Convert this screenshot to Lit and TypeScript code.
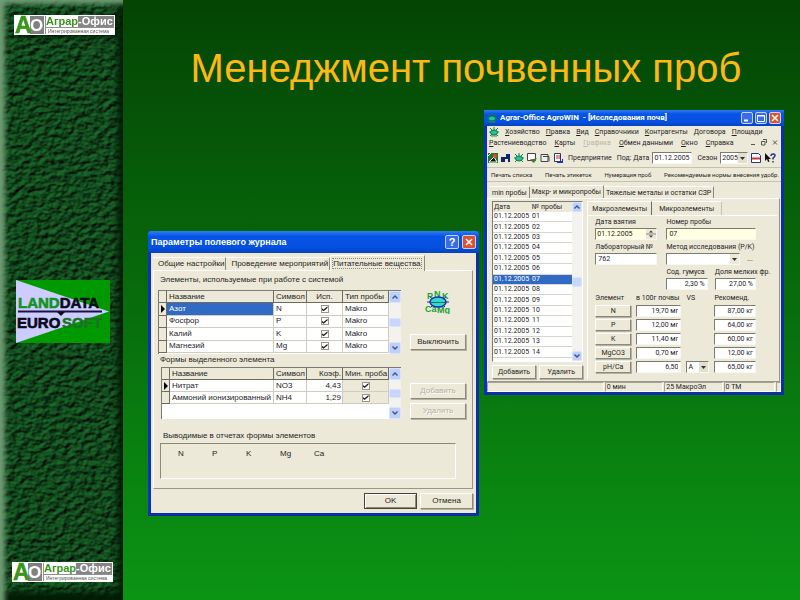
import { LitElement, html, css, svg, nothing } from "lit";
import { customElement } from "lit/decorators.js";
import { classMap } from "lit/directives/class-map.js";

const controls = css`
  :host {
    display: block;
    font: 8px/10px "Liberation Sans", Arial, sans-serif;
    color: #26241f;
  }
  * {
    box-sizing: border-box;
  }
  button,
  input,
  select {
    font: inherit;
    color: inherit;
    margin: 0;
    padding: 0;
    border: 0;
    border-radius: 0;
    background: none;
    min-width: 0;
    white-space: nowrap;
  }
  svg {
    display: block;
  }
  .window {
    display: flex;
    flex-direction: column;
    border: solid #0831c9;
    border-width: 0 3px 3px;
    border-bottom-color: #0a2fa8;
    border-right-color: #0a2fa8;
    background: #ece9d8;
    white-space: nowrap;
  }
  .titlebar {
    display: flex;
    align-items: center;
    gap: 3px;
    margin: 0 -3px;
    padding: 0 3px;
    background: linear-gradient(#2f7df2, #0654e6 25%, #0450e0 75%, #0442c0);
    color: #fff;
    font-weight: bold;
  }
  .titlebar .name {
    flex: 1;
    margin: 0;
    font-size: inherit;
  }
  .cap {
    display: grid;
    place-items: center;
    border: 1px solid #c3d4fa;
    border-radius: 2px;
    background: #3a6be8;
  }
  .cap.close {
    background: #e0512f;
  }
  .push {
    border: 1px solid;
    border-color: #fff #8c897a #8c897a #fff;
    box-shadow: 1px 1px 0 #b5b2a2;
    background: #ece9d8;
    text-align: center;
  }
  .push:disabled {
    color: #b4b1a0;
    text-shadow: 1px 1px 0 #fff;
  }
  .push.default {
    border-color: #45443c;
    box-shadow: inset 1px 1px 0 #fff, inset -1px -1px 0 #8c897a;
  }
  .field {
    width: 100%;
    height: 12px;
    padding: 0 2px;
    border: 1px solid;
    border-color: #7d7b6e #f8f7f0 #f8f7f0 #7d7b6e;
    background: #fff;
  }
  .tabs {
    display: flex;
    align-items: flex-end;
  }
  .tab {
    border-right: 1px solid #8c897a;
    border-top: 1px solid #fff;
  }
  .panel {
    border: 1px solid;
    border-color: #fff #9a978a #9a978a #fff;
  }
  table {
    border-collapse: separate;
    border-spacing: 0;
    table-layout: fixed;
    width: 100%;
  }
  th,
  td {
    padding: 0 0 0 2px;
    text-align: left;
    font-weight: normal;
    overflow: hidden;
  }
  .scroll {
    display: flex;
    flex-direction: column;
    justify-content: space-between;
    background: #f4f2ee;
  }
  .scroll button {
    height: 12px;
    display: grid;
    place-items: center;
    border-radius: 2px;
    background: #bdcffb;
    border: 1px solid #d9e3fd;
  }
  .scroll .thumb {
    height: 9px;
    background: #c6d6fc;
  }
  .selected {
    background: #316ac5;
    color: #fff;
  }
`;

const chevron = (up: boolean) => html`<svg width="6" height="4" viewBox="0 0 6 4" aria-hidden="true">
  <path d=${up ? "M.5 3.5 3 1l2.5 2.5" : "M.5.5 3 3 5.500.5"} fill="none" stroke="#3d5488" stroke-width="1.4" />
</svg>`;

const scrollbar = () => html`<div class="scroll">
  <button aria-label="Вверх">${chevron(true)}</button>
  <button class="thumb" aria-label="Ползунок"></button>
  <button aria-label="Вниз">${chevron(false)}</button>
</div>`;

const closeCross = html`<svg width="8" height="8" viewBox="0 0 8 8" aria-hidden="true">
  <path d="M1 1l6 6M7 1L1 7" stroke="#fff" stroke-width="1.5" />
</svg>`;

@customElement("slide-sidebar")
export class SlideSidebar extends LitElement {
  static styles = css`
    :host {
      display: block;
      font-family: "Liberation Sans", Arial, sans-serif;
    }
    .rail {
      position: relative;
      display: flex;
      flex-direction: column;
      justify-content: space-between;
      height: 100%;
      box-sizing: border-box;
      padding: 15px 8px 18px 12px;
      overflow: hidden;
      background: #07400c;
    }
    .texture {
      position: absolute;
      inset: 0;
      width: 100%;
      height: 100%;
    }
    .bevel {
      position: absolute;
      inset: 0;
      box-shadow: inset 7px 6px 5px -2px #6f9c74, inset -5px -8px 6px #021c04;
    }
    .logo {
      position: relative;
      display: block;
    }
    .raised {
      margin-left: 2px;
      filter: drop-shadow(2px 2px 2px #011a03);
    }
    .land {
      margin: 26px 0 0 4px;
    }
  `;

  private agrar(extra: string) {
    return html`<svg class="logo ${extra}" width="101" height="20" viewBox="0 0 101 20">
      <rect width="101" height="20" fill="#fff" />
      <rect x="16" y="1" width="14" height="18" fill="#808080" />
      <rect x="64" y="1" width="36" height="11" fill="#858585" />
      <path d="M31.500 1v18M32 12.500h68" stroke="#8f8f8f" stroke-width="1" />
      <text x="16" y="16" font-size="17" font-weight="bold" fill="#fff">O</text>
      <text x="1" y="18" font-size="23" font-weight="bold" fill="#39951c" stroke="#39951c" stroke-width=".6">A</text>
      <text x="32" y="10" font-size="11" font-weight="bold" fill="#39951c">Аграр<tspan fill="#fff">-Офис</tspan></text>
      <text x="34" y="18" font-size="5" fill="#555">Интегрированная система</text>
    </svg>`;
  }

  render() {
    return html`<aside class="rail">
      <svg class="texture" aria-hidden="true">
        <filter id="leather" x="0" y="0" width="100%" height="100%" color-interpolation-filters="sRGB">
          <feTurbulence type="fractalNoise" baseFrequency="0.15 0.19" numOctaves="2" seed="8" />
          <feDiffuseLighting lighting-color="#165a24" surfaceScale="2.500" diffuseConstant="1.200">
            <feDistantLight azimuth="235" elevation="42" />
          </feDiffuseLighting>
        </filter>
        <rect width="100%" height="100%" filter="url(#leather)" />
      </svg>
      <div class="bevel"></div>
      ${this.agrar("raised")}
      <svg class="logo land" width="94" height="63" viewBox="0 0 94 63">
        <rect width="94" height="63" fill="#009a00" />
        <path d="M0 0L93 31.500 0 63z" fill="#ccccff" />
        <path d="M2 31.500h84" stroke="#1a1248" stroke-width="2" />
        <path d="M41 32l4 4 4-4z" fill="#111" />
        <g font-size="15" font-weight="bold" stroke-width=".6">
          <text x="2" y="28" fill="#109423" stroke="#109423">LAND<tspan fill="#0a0a1a" stroke="#0a0a1a">DATA</tspan></text>
          <text x="1" y="48" fill="#0a0a1a" stroke="#0a0a1a">EURO</text>
          <text x="46" y="48" fill="#1b7325" stroke="#1b7325">SOFT</text>
        </g>
      </svg>
      ${this.agrar("")}
    </aside>`;
  }
}

@customElement("journal-dialog")
export class JournalDialog extends LitElement {
  static styles = [
    controls,
    css`
      .titlebar {
        height: 22px;
        font-size: 9px;
        border-radius: 3px 3px 0 0;
      }
      .cap {
        width: 14px;
        height: 14px;
        font-weight: bold;
        font-size: 11px;
        color: #fff;
      }
      .content {
        padding: 2px 3px 4px 2px;
      }
      .tab {
        height: 13px;
        padding: 0 1px 0 5px;
      }
      .tab.active {
        height: 16px;
        margin-bottom: -1px;
        padding: 0 3px 0 2px;
        background: #ece9d8;
        border-left: 1px solid #fff;
      }
      .tab.active span {
        outline: 1px dotted #8c897a;
      }
      .panel {
        height: 219px;
        padding: 4px 6px 0 4px;
      }
      .label {
        margin: 0 2px;
        height: 15px;
      }
      .split {
        display: grid;
        grid-template-columns: minmax(0, 246fr) 56px;
        gap: 9px;
      }
      .grid {
        display: grid;
        grid-template-columns: minmax(0, 1fr) 12px;
        background: #fff;
        border: 1px solid #7d7b6e;
        border-width: 1px 0 0 1px;
      }
      .grid.tall {
        height: 64px;
      }
      .grid.tall table {
        height: 62px;
      }
      .grid.short {
        height: 52px;
      }
      .grid table {
        height: 0;
      }
      th {
        height: 12px;
        background: #ece9d8;
        border: solid #6e6c60;
        border-width: 0 1px 1px 0;
      }
      td {
        height: 12px;
        border: solid #cfccc0;
        border-width: 0 1px 1px 0;
      }
      td.mark {
        background: #ece9d8;
        border-color: #6e6c60;
        padding: 0;
      }
      .mark svg {
        margin-left: 2px;
      }
      .c-mark {
        width: 8px;
      }
      .c-symbol {
        width: 33px;
      }
      .c-mid {
        width: 36px;
      }
      .c-last {
        width: 46px;
      }
      .num {
        text-align: right;
        padding-right: 1px;
      }
      .tick {
        text-align: center;
        padding: 0;
      }
      .shade {
        background: #ece9d8;
      }
      input[type="checkbox"] {
        appearance: none;
        display: grid;
        place-items: center;
        width: 8px;
        height: 8px;
        margin: 0 auto;
        border: 1px solid #9a978a;
        background: #fff;
      }
      input[type="checkbox"]:checked::after {
        content: "";
        width: 6px;
        height: 5px;
        background: #222;
        clip-path: polygon(0 35%, 35% 65%, 100% 0, 100% 35%, 35% 100%, 0 70%);
      }
      .side {
        display: flex;
        flex-direction: column;
        justify-content: space-between;
        align-items: center;
      }
      .side.high {
        padding-bottom: 4px;
      }
      .side.low {
        justify-content: flex-end;
        gap: 4px;
      }
      .push {
        height: 16px;
        width: 100%;
      }
      .between {
        margin: 1px 2px 0;
        height: 12px;
      }
      .below {
        margin: 12px 5px 0;
        height: 12px;
      }
      .outputs {
        display: flex;
        gap: 24px;
        height: 36px;
        margin: 0 10px 0 2px;
        padding: 5px 17px;
        border: 1px solid;
        border-color: #8c897a #fff #fff #8c897a;
      }
      .outputs span {
        width: 10px;
      }
      .inset {
        padding-left: 3px;
      }
      .footer {
        display: flex;
        justify-content: flex-end;
        gap: 3px;
        padding-top: 4px;
      }
      .footer .push {
        width: 53px;
      }
    `,
  ];

  private mark(on: boolean) {
    return html`<td class="mark">
      ${on
        ? html`<svg width="4" height="8" viewBox="0 0 4 8" aria-hidden="true"><path d="M0 0l4 4-4 4z" /></svg>`
        : nothing}
    </td>`;
  }

  private cols() {
    return html`<colgroup>
      <col class="c-mark" /><col /><col class="c-symbol" /><col class="c-mid" /><col class="c-last" />
    </colgroup>`;
  }

  render() {
    const elements = [["Азот", "N"], ["Фосфор", "P"], ["Калий", "K"], ["Магнезий", "Mg"]];
    const forms = [["Нитрат", "NO3", "4,43"], ["Аммоний ионизированный", "NH4", "1,29"]];
    return html`<section class="window">
      <header class="titlebar">
        <h2 class="name">Параметры полевого журнала</h2>
        <button class="cap">?</button>
        <button class="cap close" aria-label="Закрыть">${closeCross}</button>
      </header>
      <div class="content">
        <div class="tabs" role="tablist">
          <button class="tab" role="tab">Общие настройки</button>
          <button class="tab" role="tab">Проведение мероприятий</button>
          <button class="tab active" role="tab" aria-selected="true"><span>Питательные вещества</span></button>
        </div>
        <div class="panel">
          <div class="label">Элементы, используемые при работе с системой</div>
          <div class="split">
            <div class="grid tall">
              <table>
                ${this.cols()}
                <thead>
                  <tr><th></th><th>Название</th><th>Символ</th><th class="tick">Исп.</th><th>Тип пробы</th></tr>
                </thead>
                <tbody>
                  ${elements.map(
                    ([name, symbol], i) => html`<tr>
                      ${this.mark(i === 0)}
                      <td class=${classMap({ selected: i === 0 })}>${name}</td>
                      <td>${symbol}</td>
                      <td class="tick"><input type="checkbox" checked aria-label=${name} /></td>
                      <td>Makro</td>
                    </tr>`
                  )}
                </tbody>
              </table>
              ${scrollbar()}
            </div>
            <div class="side high">
              <svg width="26" height="24" viewBox="0 0 26 24" aria-hidden="true">
                <g font-size="9" font-weight="bold" fill="#16a336">
                  <text x="2" y="9">P</text><text x="9" y="7">N</text><text x="17" y="9">K</text>
                  <text x="0" y="22">Ca</text><text x="12" y="23">Mg</text>
                </g>
                <ellipse cx="13" cy="12" rx="8" ry="5" fill="#35d6d8" stroke="#1c2ca8" stroke-width="1.500" />
                <path d="M2 12h4M20 12h4M5 7l3 2M21 7l-3 2M6 17l2-2M20 17l-2-2" stroke="#1c2ca8" />
                <path d="M5.500 12.500h15" stroke="#167c54" />
              </svg>
              <button class="push">Выключить</button>
            </div>
          </div>
          <div class="between">Формы выделенного элемента</div>
          <div class="split">
            <div class="inset">
              <div class="grid short">
                <table>
                  ${this.cols()}
                  <thead>
                    <tr><th></th><th>Название</th><th>Символ</th><th class="num">Коэф.</th><th>Мин. проба</th></tr>
                  </thead>
                  <tbody>
                    ${forms.map(
                      ([name, symbol, factor], i) => html`<tr>
                        ${this.mark(i === 0)}
                        <td>${name}</td>
                        <td>${symbol}</td>
                        <td class="num">${factor}</td>
                        <td class="tick shade"><input type="checkbox" checked aria-label=${name} /></td>
                      </tr>`
                    )}
                  </tbody>
                </table>
                ${scrollbar()}
              </div>
            </div>
            <div class="side low">
              <button class="push" disabled>Добавить</button>
              <button class="push" disabled>Удалить</button>
            </div>
          </div>
          <div class="below">Выводимые в отчетах формы элементов</div>
          <div class="outputs">${["N", "P", "K", "Mg", "Ca"].map((s) => html`<span>${s}</span>`)}</div>
        </div>
        <footer class="footer">
          <button class="push default">OK</button>
          <button class="push">Отмена</button>
        </footer>
      </div>
    </section>`;
  }
}

const bug = html`<svg width="10" height="10" viewBox="0 0 10 10" aria-hidden="true">
  <path d="M1 1l2 2M9 1L7 3M0 5h10M1 9l2-2M9 9L7 7M5 0v3" stroke="#16803c" />
  <ellipse cx="5" cy="5.500" rx="3.500" ry="2.500" fill="#26c1a4" stroke="#14703a" />
  <path d="M2 9h6" stroke="#16a336" />
</svg>`;

@customElement("agro-window")
export class AgroWindow extends LitElement {
  static styles = [
    controls,
    css`
      :host {
        font: 7px/10px Roboto, "Liberation Sans", sans-serif;
      }
      .titlebar {
        height: 16px;
        font-size: 8px;
      }
      .caps {
        display: flex;
        gap: 2px;
      }
      .cap {
        width: 12px;
        height: 12px;
      }
      .menu {
        display: flex;
        align-items: center;
        gap: 6px;
        height: 11px;
        padding-left: 2px;
      }
      .menu.second {
        gap: 8px;
      }
      .menu button::first-letter {
        text-decoration: underline;
      }
      .faded {
        color: #bab7a6;
      }
      .mdi {
        margin-left: auto;
        display: flex;
        gap: 5px;
        padding-right: 3px;
      }
      .tools {
        display: flex;
        align-items: center;
        gap: 3px;
        height: 20px;
        padding: 0 3px 0 1px;
        border-bottom: 1px solid #c5c2b2;
      }
      .tools label {
        margin-left: 2px;
      }
      .tools .date {
        width: 40px;
        padding: 0 1px;
      }
      .actions {
        display: flex;
        justify-content: space-between;
        height: 14px;
        padding: 0 2px 0 4px;
        border-bottom: 1px solid #c5c2b2;
        font-size: 6px;
      }
      .pick {
        display: grid;
        grid-template-columns: minmax(0, 1fr) 9px;
        align-items: center;
        height: 12px;
        border: 1px solid;
        border-color: #7d7b6e #f8f7f0 #f8f7f0 #7d7b6e;
        background: #fff;
      }
      .pick select {
        appearance: none;
        grid-area: 1 / 1 / 2 / 3;
        width: 100%;
        padding-left: 1px;
      }
      .pick svg {
        grid-area: 1 / 2;
        background: #e2dfce;
        pointer-events: none;
      }
      .year {
        width: 28px;
      }
      .tabs.main {
        margin-top: 3px;
        padding-left: 3px;
      }
      .tabs.main .tab {
        height: 12px;
        padding: 0 2px;
      }
      .tabs.main .tab.active {
        height: 13px;
        padding: 0 2px;
      }
      .panel.main {
        display: grid;
        grid-template-columns: minmax(0, 93fr) minmax(0, 193fr);
        gap: 4px;
        margin-right: 1px;
        height: 184px;
        padding: 2px 2px 2px 4px;
      }
      .samples {
        display: flex;
        flex-direction: column;
        gap: 3px;
      }
      .list {
        display: grid;
        grid-template-columns: minmax(0, 1fr) 10px;
        height: 161px;
        border: 1px solid;
        border-color: #7d7b6e #fff #fff #7d7b6e;
        background: #fff;
      }
      .list table {
        height: 156px;
      }
      .list th {
        height: 10px;
        line-height: 9px;
        background: #ece9d8;
      }
      .list td {
        line-height: 9px;
        border-bottom: 1px solid #d8d6cc;
      }
      .c-date {
        width: 37px;
      }
      .list td:first-child,
      .list th:first-child {
        padding-left: 1px;
      }
      .list .scroll button {
        height: 10px;
      }
      .pair {
        display: grid;
        grid-template-columns: 1fr 1fr;
        gap: 3px;
      }
      .pair .push {
        height: 14px;
      }
      .details {
        display: flex;
        flex-direction: column;
      }
      .inner .tab {
        height: 14px;
        padding: 0 7px;
        border-right-color: #c5c2b2;
      }
      .inner .tab.active {
        border-right-color: #6e6c60;
        border-left: 1px solid #fff;
        padding: 0 4px;
      }
      .sheet {
        flex: 1;
        border: solid #fff;
        border-width: 1px 0 0 1px;
        padding: 1px 21px 0 7px;
      }
      .two {
        display: grid;
        grid-template-columns: minmax(0, 63fr) minmax(0, 91fr);
        gap: 2px 9px;
      }
      .cell {
        display: flex;
        flex-direction: column;
        min-width: 0;
      }
      .cell label {
        line-height: 11px;
      }
      .warm {
        background: #ffffe1;
      }
      .spin {
        display: grid;
        grid-template-columns: minmax(0, 1fr) 10px;
        border: 1px solid;
        border-color: #7d7b6e #f8f7f0 #f8f7f0 #7d7b6e;
        background: #ffffe1;
        height: 12px;
      }
      .spin input {
        width: 100%;
        padding: 0 1px;
      }
      .method {
        display: grid;
        grid-template-columns: minmax(0, 1fr) 12px;
        gap: 4px;
      }
      .method .pick svg {
        background: #ece9d8;
      }
      .shares {
        display: grid;
        grid-template-columns: minmax(0, 42fr) minmax(0, 42fr);
        gap: 7px;
      }
      .right {
        text-align: right;
      }
      .values {
        display: grid;
        grid-template-columns: minmax(0, 36fr) minmax(0, 46fr) 23px minmax(0, 42fr);
        column-gap: 5px;
        row-gap: 2px;
        align-items: center;
        margin-top: 3px;
      }
      .values .push {
        height: 12px;
        line-height: 9px;
      }
      .status {
        display: grid;
        grid-template-columns: 116fr 58fr 58fr 51fr 5fr;
        gap: 1px;
        height: 10px;
      }
      .status span {
        padding-left: 1px;
        border: 1px solid;
        border-color: #a5a294 #fff #fff #a5a294;
        line-height: 8px;
      }
    `,
  ];

  private arrow = html`<svg width="9" height="10" viewBox="0 0 9 10" aria-hidden="true">
    <path d="M2 4h5L4.500 7z" fill="#333" />
  </svg>`;

  private field(id: string, label: string, value: string, kind = "") {
    return html`<div class="cell">
      <label for=${id}>${label}</label><input id=${id} class="field ${kind}" .value=${value} />
    </div>`;
  }

  render() {
    const rows = [
      ["N", "19,70 мг", "87,00 кг"],
      ["P", "12,00 мг", "64,00 кг"],
      ["K", "11,40 мг", "60,00 кг"],
      ["MgCO3", "0,70 мг", "12,00 кг"],
      ["pH/Ca", "6,50", "65,00 кг"],
    ];
    const toolIcons = [
      svg`<rect width="10" height="10" fill="#1d7a2b"/><path d="M0 3l3-3M1 9l5-5 3 5z" fill="#111" stroke="#fff"/><circle cx="7" cy="3" r="2" fill="#e8433a"/>`,
      svg`<path d="M0 9V4h5V1h4v8H7V6H4v3z" fill="#12246e"/>`,
      svg`<path d="M1 1l2 2M9 1L7 3M0 5h10M1 9l2-2M9 9L7 7M5 0v3" stroke="#16803c"/><ellipse cx="5" cy="5.500" rx="3.500" ry="2.500" fill="#26c1a4" stroke="#14703a"/>`,
      svg`<path d="M.5.5h8v7h-8z" fill="#fff" stroke="#444"/><path d="M3 7l4 3 3-5z" fill="#218a35"/><path d="M3 7h4" stroke="#c22"/>`,
      svg`<path d="M1 1.500h7v7H1zM3 3.500h6v5" fill="#eee" stroke="#444"/>`,
      svg`<path d="M1.500.5h6v8h-6z" fill="#fff" stroke="#336"/><path d="M3 3h4M3 5h4" stroke="#c22"/><path d="M4 9h6V6" stroke="#23b" fill="none" stroke-width="2"/>`,
    ];
    return html`<section class="window">
      <header class="titlebar">
        ${bug}
        <h2 class="name">Agrar-Office AgroWIN&nbsp; - [Исследования почв]</h2>
        <div class="caps">
          <button class="cap" aria-label="Свернуть">
            <svg width="8" height="8" viewBox="0 0 8 8"><path d="M1 6.500h4" stroke="#fff" stroke-width="2" /></svg>
          </button>
          <button class="cap" aria-label="Развернуть">
            <svg width="8" height="8" viewBox="0 0 8 8"><path d="M.5 1.500h7v6h-7zM0 2h8" stroke="#fff" fill="none" /></svg>
          </button>
          <button class="cap close" aria-label="Закрыть">${closeCross}</button>
        </div>
      </header>
      <nav class="menu">
        ${bug}
        ${["Хозяйство", "Правка", "Вид", "Справочники", "Контрагенты", "Договора", "Площади"].map(
          (m) => html`<button>${m}</button>`
        )}
      </nav>
      <nav class="menu second">
        ${["Растениеводство", "Карты", "Графика", "Обмен данными", "Окно", "Справка"].map(
          (m) => html`<button class=${classMap({ faded: m === "Графика" })}>${m}</button>`
        )}
        <span class="mdi">
          <svg width="6" height="7" viewBox="0 0 6 7"><path d="M1 5.500h4" stroke="#555" /></svg>
          <svg width="6" height="7" viewBox="0 0 6 7"><path d="M2 .5h3.500v3.500M.5 2.500h3.500v3.500H.5z" stroke="#555" fill="none" /></svg>
          <svg width="6" height="7" viewBox="0 0 6 7"><path d="M1 1.500l4 4M5 1.500l-4 4" stroke="#555" /></svg>
        </span>
      </nav>
      <div class="tools">
        ${toolIcons.map((i) => html`<svg width="10" height="10" viewBox="0 0 10 10" aria-hidden="true">${i}</svg>`)}
        <label>Предприятие</label><label for="date">Под: Дата</label>
        <input id="date" class="field date" .value=${"01.12.2005"} />
        <label for="season">Сезон</label>
        <span class="pick year"><select id="season"><option>2005</option></select>${this.arrow}</span>
        <svg width="10" height="10" viewBox="0 0 10 10" aria-hidden="true">
          <path d="M.5.5h7l2 2v7h-9z" fill="#fff" stroke="#24348c" /><path d="M1 5.500h8" stroke="#c33" stroke-width="2" />
        </svg>
        <svg width="12" height="10" viewBox="0 0 12 10" aria-hidden="true">
          <path d="M1 0v8l2-2 1 3 1.500-.5L4.500 6H7z" fill="#111" />
          <path d="M7 3q0-2 2-2t2 1.500q0 1-2 2.500v1.500M9 8v1.500" fill="none" stroke="#23349c" stroke-width="1.500" />
        </svg>
      </div>
      <div class="actions">
        ${["Печать списка", "Печать этикеток", "Нумерация проб", "Рекомендуемые нормы внесения удобр."].map(
          (m) => html`<button>${m}</button>`
        )}
      </div>
      <div class="tabs main" role="tablist">
        <button class="tab" role="tab">min пробы</button>
        <button class="tab active" role="tab" aria-selected="true">Макр- и микропробы</button>
        <button class="tab" role="tab">Тяжелые металы и остатки СЗР</button>
      </div>
      <div class="panel main">
        <div class="samples">
          <div class="list">
            <table>
              <colgroup><col class="c-date" /><col /></colgroup>
              <thead><tr><th>Дата</th><th>№ пробы</th></tr></thead>
              <tbody>
                ${Array.from({ length: 14 }, (_, i) => i + 1).map(
                  (n) => html`<tr class=${classMap({ selected: n === 7 })}>
                    <td>01.12.2005</td><td>${String(n).padStart(2, "0")}</td>
                  </tr>`
                )}
              </tbody>
            </table>
            ${scrollbar()}
          </div>
          <div class="pair">
            <button class="push">Добавить</button>
            <button class="push">Удалить</button>
          </div>
        </div>
        <div class="details">
          <div class="tabs inner" role="tablist">
            <button class="tab active" role="tab" aria-selected="true">Макроэлементы</button>
            <button class="tab" role="tab">Микроэлементы</button>
          </div>
          <div class="sheet">
            <div class="two">
              <div class="cell">
                <label for="taken">Дата взятия</label>
                <span class="spin">
                  <input id="taken" .value=${"01.12.2005"} />
                  <svg width="10" height="10" viewBox="0 0 10 10" aria-hidden="true">
                    <path d="M0 0h10v10H0z" fill="#ece9d8" /><path d="M0 5h10" stroke="#8c897a" />
                    <path d="M3 3.500h4L5 1.500zM3 6.500h4L5 8.500z" fill="#333" />
                  </svg>
                </span>
              </div>
              ${this.field("number", "Номер пробы", "07", "warm")}
              ${this.field("lab", "Лабораторный №", "762")}
              <div class="cell">
                <label for="method">Метод исследования (P/K)</label>
                <div class="method">
                  <span class="pick"><select id="method"><option></option></select>${this.arrow}</span>
                  <button>...</button>
                </div>
              </div>
              <div></div>
              <div class="shares">
                ${this.field("humus", "Сод. гумуса", "2,30 %", "right")}
                ${this.field("fine", "Доля мелких фр.", "27,00 %", "right")}
              </div>
            </div>
            <div class="values">
              <span>Элемент</span><span>в 100г почвы</span><span>VS</span><span>Рекоменд.</span>
              ${rows.map(
                ([name, amount, advice], i) => html`<button class="push">${name}</button>
                  <input class="field right" aria-label="${name} в 100г почвы" .value=${amount} />
                  ${i === 4
                    ? html`<span class="pick"><select aria-label="VS"><option>A</option></select>${this.arrow}</span>`
                    : html`<span></span>`}
                  <input class="field right" aria-label="${name} рекоменд." .value=${advice} />`
              )}
            </div>
          </div>
        </div>
      </div>
      <footer class="status">
        <span></span><span>0 мин</span><span>25 МакроЭл</span><span>0 ТМ</span><span></span>
      </footer>
    </section>`;
  }
}

@customElement("app-root")
export class AppRoot extends LitElement {
  static styles = css`
    :host {
      display: block;
    }
    .slide {
      display: grid;
      grid-template-columns: 123px minmax(0, 1fr);
      min-height: 100vh;
      background: linear-gradient(#044404, #0b9414);
    }
    .stage {
      padding: 44px 16px 0 25px;
      min-width: 0;
    }
    .title {
      margin: 0;
      text-align: center;
      font: 40px/48px "Liberation Sans", Arial, sans-serif;
      color: #fdb813;
      white-space: nowrap;
    }
    .windows {
      display: grid;
      grid-template-columns: minmax(0, 331fr) minmax(0, 300fr);
      align-items: start;
      gap: 5px;
      margin-top: 18px;
    }
    .lower {
      margin-top: 121px;
    }
  `;

  render() {
    return html`<main class="slide">
      <slide-sidebar></slide-sidebar>
      <div class="stage">
        <h1 class="title">Менеджмент почвенных проб</h1>
        <div class="windows">
          <journal-dialog class="lower"></journal-dialog>
          <agro-window></agro-window>
        </div>
      </div>
    </main>`;
  }
}
